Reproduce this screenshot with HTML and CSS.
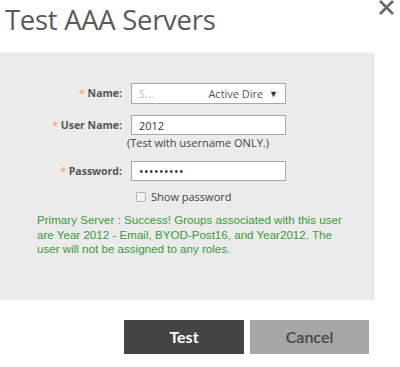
FILE: index.html
```html
<!DOCTYPE html>
<html>
<head>
	<meta charset="utf-8">
	<title>Test AAA Servers</title>
	<link rel="stylesheet" href="styles.css">
</head>
<body>
	<div class="dialog">
		<div class="head">
			<h1 class="title">Test AAA Servers</h1>
			<a class="close" href="javascript:;">
				<svg width="17" height="15" viewBox="0 0 17 15">
					<path d="M2 1 L15 14 M15 1 L2 14" stroke="#666" stroke-width="2.6" fill="none" />
				</svg>
			</a>
		</div>
		<div class="panel">
			<div class="form">
				<label class="lbl"><span class="req">*</span> Name:</label>
				<div class="field">
					<div class="select">
						<span class="blur">S...</span>
						<span class="opt">Active Dire</span>
						<span class="arrow">&#9660;</span>
					</div>
				</div>

				<label class="lbl lbl-user"><span class="req">*</span> User Name:</label>
				<div class="field">
					<div class="input">2012</div>
					<div class="hint">(Test with username ONLY.)</div>
				</div>

				<label class="lbl lbl-pass"><span class="req">*</span> Password:</label>
				<div class="field">
					<div class="input dots">&#8226;&#8226;&#8226;&#8226;&#8226;&#8226;&#8226;&#8226;&#8226;</div>
					<div class="check"><span class="box"></span>Show password</div>
				</div>
			</div>
			<p class="msg">Primary Server : Success! Groups associated with this user are Year 2012 - Email, BYOD-Post16, and Year2012. The user will not be assigned to any roles.</p>
		</div>
		<div class="buttons">
			<a class="btn btn-test" href="javascript:;">Test</a>
			<a class="btn btn-cancel" href="javascript:;">Cancel</a>
		</div>
	</div>
</body>
</html>
```

FILE: styles.css
```css
* {
	padding: 0px;
	margin: 0px;
	box-sizing: border-box;
}
body {
	background: #fff;
	font-family: "Open Sans", "Liberation Sans", sans-serif;
	width: 400px;
	height: 367px;
	overflow: hidden;
}
.head {
	height: 53px;
	display: flex;
	justify-content: space-between;
	align-items: flex-start;
}
.title {
	font-weight: 400;
	font-size: 27.5px;
	color: #5a5a5a;
	padding-left: 5px;
	line-height: 39px;
	letter-spacing: -0.3px;
}
.close {
	display: block;
	margin: 0 5px 0 0;
	line-height: 0;
}
.panel {
	width: 374px;
	height: 247px;
	background: #ebebeb;
	border-right: 1px solid #e2e2e2;
	padding-top: 30px;
}
.form {
	display: grid;
	grid-template-columns: 122px 155px;
	column-gap: 9px;
	row-gap: 11px;
	align-items: start;
}
.lbl {
	text-align: right;
	font-size: 10.5px;
	font-weight: 700;
	color: #555;
	line-height: 20px;
}
.req {
	color: #f0a050;
	font-weight: 400;
}
.select, .input {
	height: 21px;
	background: #fff;
	border: 1px solid #a8a8a8;
	font-size: 11px;
	color: #333;
	line-height: 19px;
	padding: 0 7px;
}
.select {
	display: flex;
	align-items: center;
}
.blur {
	color: #b8b8b8;
	filter: blur(0.6px);
	width: 71px;
}
.opt {
	color: #555;
	width: 59px;
	overflow: hidden;
	white-space: nowrap;
}
.arrow {
	font-size: 9px;
	color: #333;
	margin-left: 3px;
}
.input {
	height: 20px;
}
.dots {
	letter-spacing: 0.5px;
	font-size: 12px;
}
.hint {
	font-size: 11px;
	color: #444;
	line-height: 15px;
	margin-left: -4px;
}
.check {
	margin-top: 8px;
	display: flex;
	align-items: center;
	font-size: 11px;
	color: #444;
}
.box {
	width: 10px;
	height: 10px;
	background: #f4f4f4;
	border: 1px solid #b5b5b5;
	border-radius: 2px;
	margin: 0 5px 0 5px;
}
.msg {
	margin: 9px 0 0 37px;
	width: 318px;
	font-family: "Liberation Sans", Arial, sans-serif;
	font-size: 11.6px;
	line-height: 14.5px;
	color: #3a9a3a;
}
.buttons {
	display: flex;
	justify-content: flex-end;
	gap: 6px;
	padding: 20px 31px 0 0;
}
.btn {
	display: block;
	width: 120px;
	height: 34px;
	line-height: 34px;
	text-align: center;
	text-decoration: none;
	font-family: Lato, "Open Sans", sans-serif;
	font-size: 16px;
}
.btn-test {
	background: #444;
	color: #fff;
	font-weight: 700;
}
.btn-cancel {
	width: 119px;
	background: #a6a6a6;
	color: #444;
	font-weight: 600;
}
```
